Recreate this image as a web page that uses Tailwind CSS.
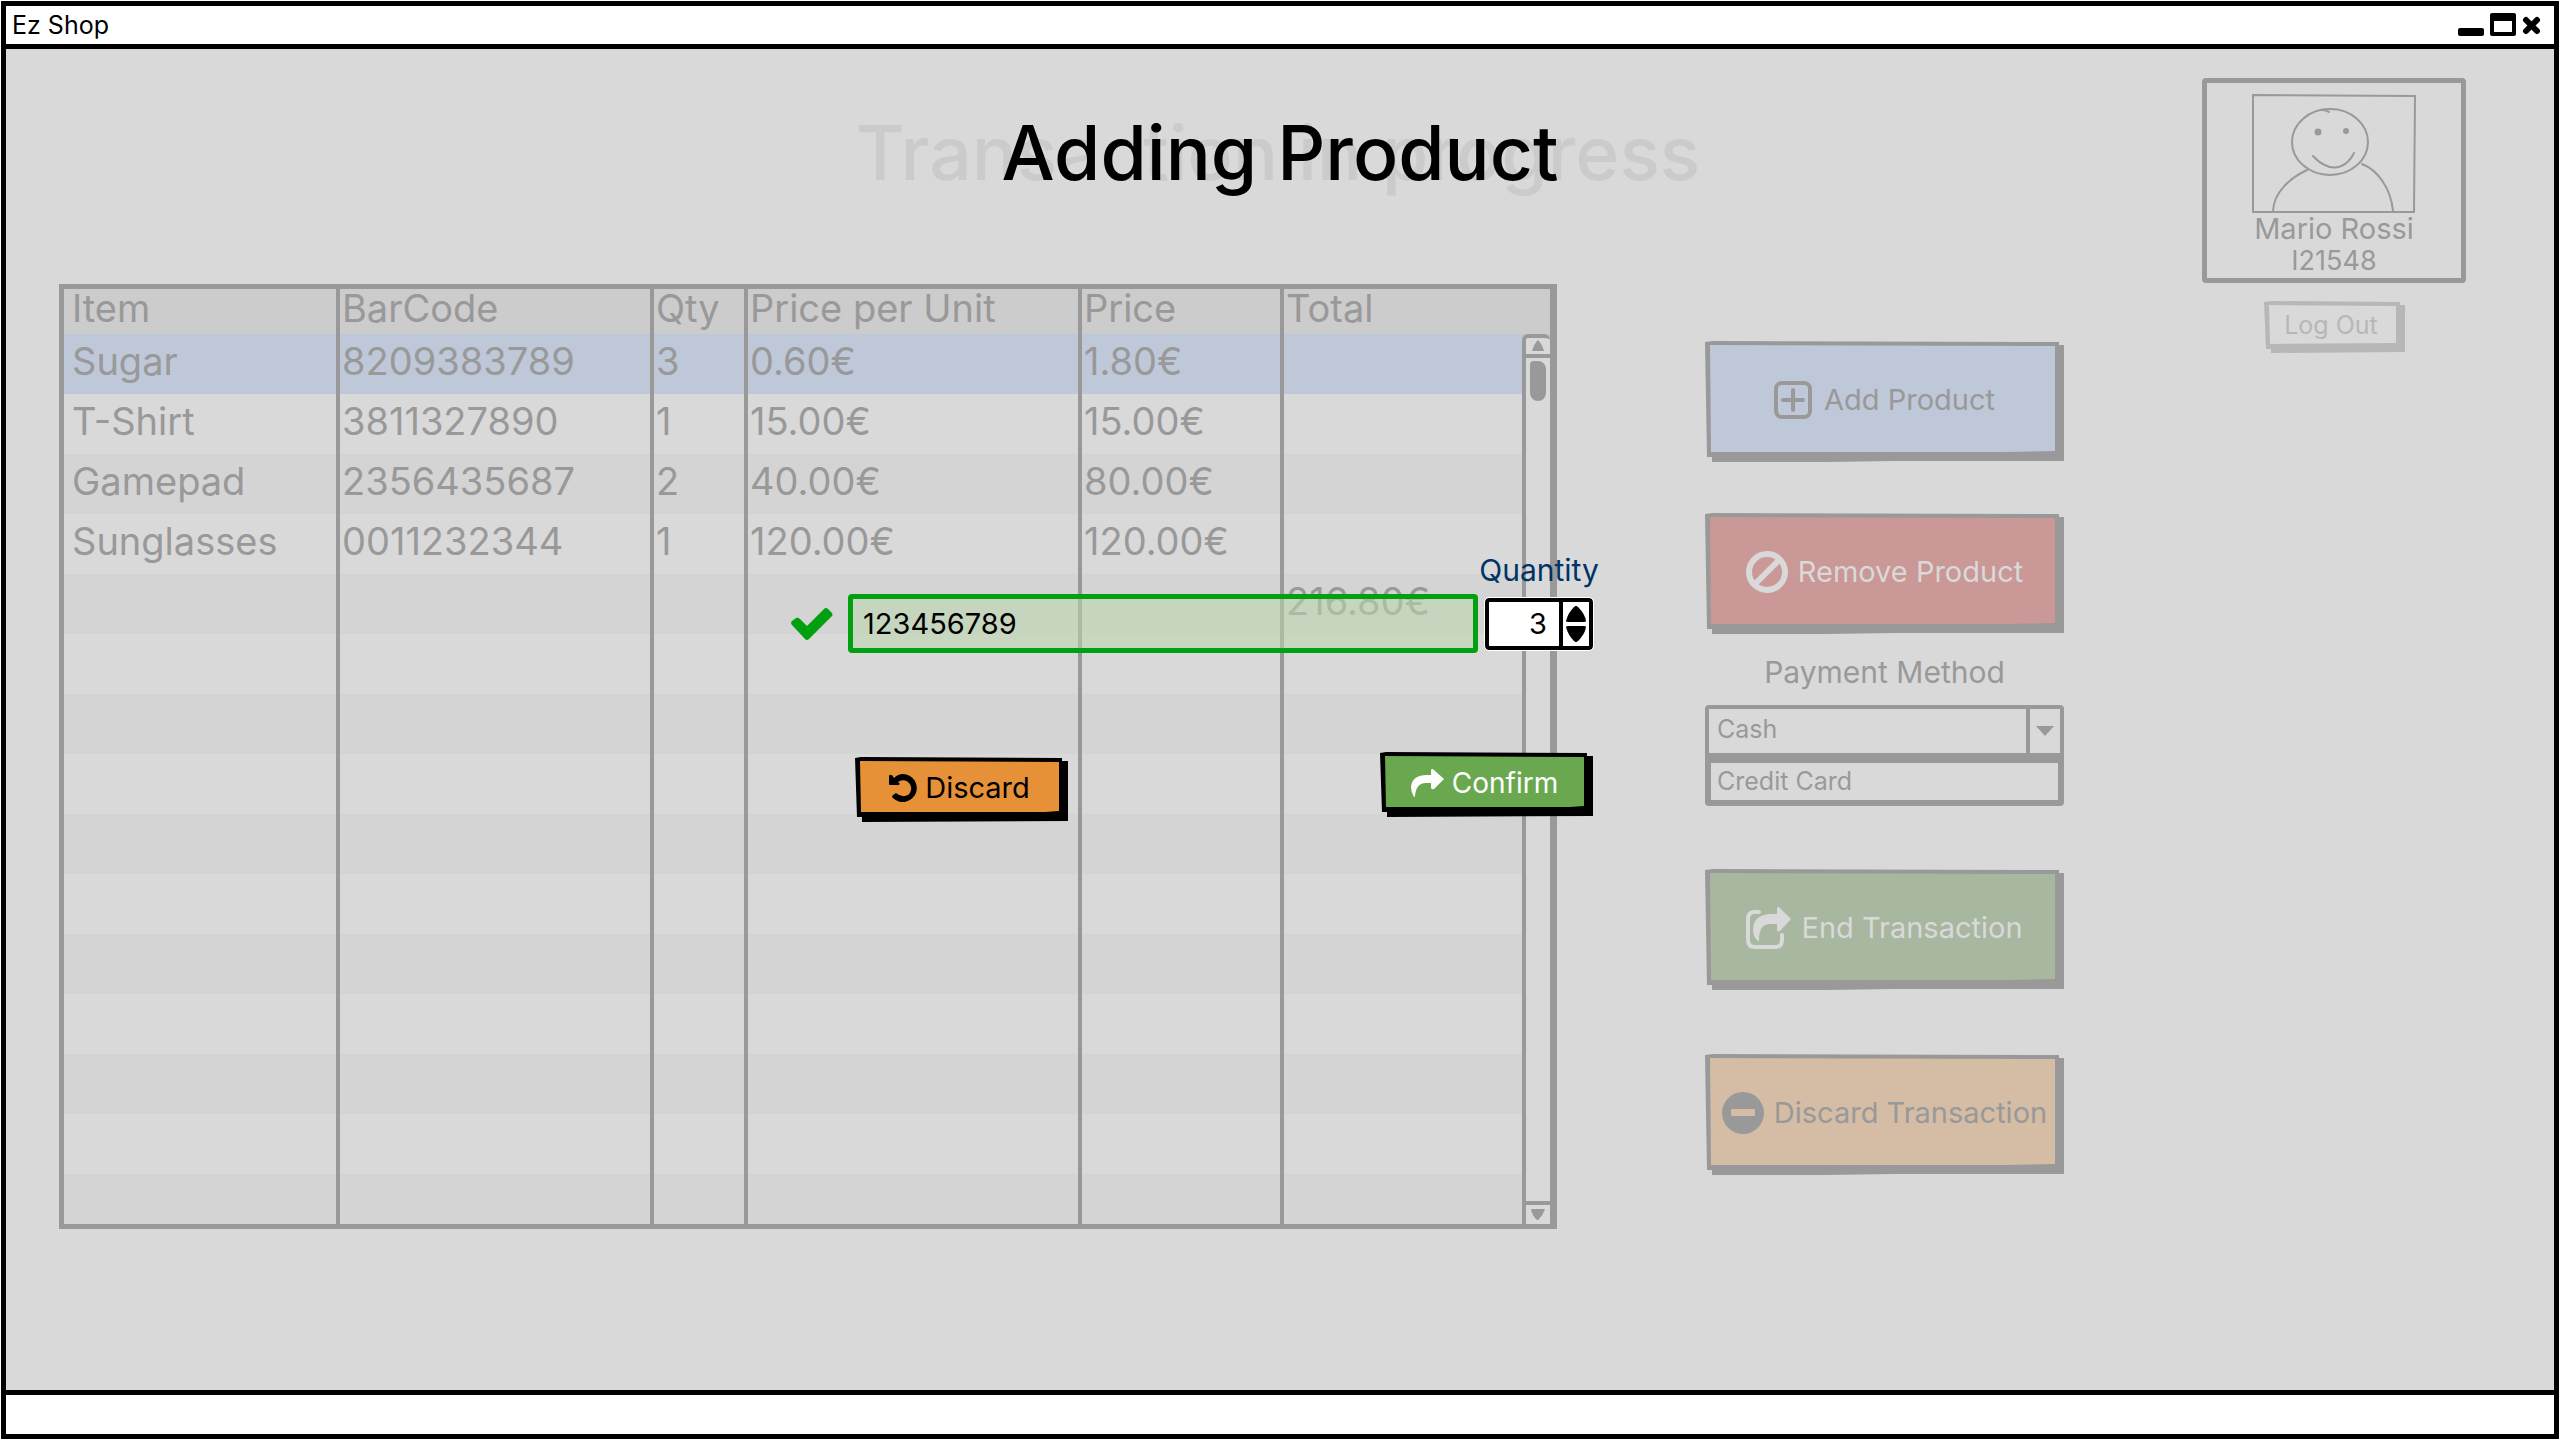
<!DOCTYPE html>
<html lang="en">
<head>
<meta charset="utf-8">
<meta name="viewport" content="width=device-width, initial-scale=1">
<title>Ez Shop</title>
<script src="https://cdn.jsdelivr.net/npm/@tailwindcss/browser@4"></script>
</head>
<body class="bg-white font-['Inter',sans-serif] text-[#999]">

<!-- Sketched frames: dark silhouette in the text colour, face in the fill colour -->
<svg class="hidden" aria-hidden="true">
  <symbol id="frame-lg" viewBox="0 0 359 121" preserveAspectRatio="none">
    <path fill="currentColor" d="M0 1 8 0 354 1V4H359V120H190L120 121H7V116H2Z"/>
    <path d="M5 4 350 5V110L300 111H6Z"/>
  </symbol>
  <symbol id="frame-md" viewBox="0 0 213 65" preserveAspectRatio="none">
    <path fill="currentColor" d="M0 1 6 0 207 1V4H213V64L7 65V60H2Z"/>
    <path d="M5 4 204 5V54L190 55 6 55Z"/>
  </symbol>
  <symbol id="frame-sm" viewBox="0 0 141 52" preserveAspectRatio="none">
    <path fill="currentColor" d="M0 1 8 0 136 1V4H141V51L7 52V48H2Z"/>
    <path d="M5 4 132 5V42L6 43Z"/>
  </symbol>
</svg>

<div class="flex min-h-screen p-px">
<div class="flex flex-1 flex-col border-5 border-black">

  <header class="flex h-[43px] items-center justify-between border-b-5 border-black bg-white pr-[13px] pl-1.5 text-black">
    <span class="text-[25px] leading-8">Ez Shop</span>
    <div class="flex items-center gap-1.5">
      <button type="button" aria-label="Minimize"><svg class="block h-6 w-[26px]" viewBox="0 0 26 24"><rect y="15" width="26" height="8" rx="2"/></svg></button>
      <button type="button" aria-label="Maximize"><svg class="block h-6 w-[26px]" viewBox="0 0 26 24"><path fill-rule="evenodd" d="M2 0H24Q26 0 26 2V21Q26 23 24 23H2Q0 23 0 21V2Q0 0 2 0ZM4 8V19H22V8Z"/></svg></button>
      <button type="button" aria-label="Close"><svg class="block h-6 w-[19px]" viewBox="0 0 19 24"><path d="M4 7 15 18M15 7 4 18" stroke="currentColor" stroke-width="6" stroke-linecap="round"/></svg></button>
    </div>
  </header>

  <main class="grid flex-1 grid-cols-1 grid-rows-1 bg-[#d9d9d9]">

    <!-- Page behind the dialog -->
    <h2 class="mt-[58px] self-start justify-self-center pr-1 text-[75px] leading-[92px] font-medium text-[#cbcbcb] [grid-area:1/1]">Transaction in progress</h2>

    <div class="flex items-start pr-[88px] pl-[53px] [grid-area:1/1]">
      <section class="mt-[235px] grid flex-1 border-5 border-r-7 border-[#999]">
        <table class="w-full table-fixed border-separate border-spacing-0 text-left text-[38px] whitespace-nowrap [grid-area:1/1] [&_td]:h-[60px] [&_td]:border-[#999] [&_td]:px-0.5 [&_td]:py-0 [&_td]:align-top [&_td]:leading-[54px] [&_td:first-child]:pl-2 [&_td:not(:last-child)]:border-r-4 [&_th]:h-[45px] [&_th]:border-[#999] [&_th]:px-0.5 [&_th]:py-0 [&_th]:align-top [&_th]:leading-[38px] [&_th]:font-normal [&_th:first-child]:pl-2 [&_th:not(:last-child)]:border-r-4">
          <colgroup><col class="w-[276px]"><col class="w-[314px]"><col class="w-[94px]"><col class="w-[334px]"><col class="w-[202px]"><col></colgroup>
          <thead class="bg-[#ccc]">
            <tr><th>Item</th><th>BarCode</th><th>Qty</th><th>Price per Unit</th><th>Price</th><th>Total</th></tr>
          </thead>
          <tbody class="[&>tr:first-child]:bg-[#bec8d8] [&>tr:last-child>td]:h-[50px] [&>tr:nth-child(2n+3)]:bg-[#d4d4d4]">
            <tr><td>Sugar</td><td>8209383789</td><td>3</td><td>0.60€</td><td>1.80€</td><td></td></tr>
            <tr><td>T-Shirt</td><td>3811327890</td><td>1</td><td>15.00€</td><td>15.00€</td><td></td></tr>
            <tr><td>Gamepad</td><td>2356435687</td><td>2</td><td>40.00€</td><td>80.00€</td><td></td></tr>
            <tr><td>Sunglasses</td><td>0011232344</td><td>1</td><td>120.00€</td><td>120.00€</td><td></td></tr>
            <tr><td></td><td></td><td></td><td></td><td></td><td>216.80€</td></tr>
            <tr><td></td><td></td><td></td><td></td><td></td><td></td></tr>
            <tr><td></td><td></td><td></td><td></td><td></td><td></td></tr>
            <tr><td></td><td></td><td></td><td></td><td></td><td></td></tr>
            <tr><td></td><td></td><td></td><td></td><td></td><td></td></tr>
            <tr><td></td><td></td><td></td><td></td><td></td><td></td></tr>
            <tr><td></td><td></td><td></td><td></td><td></td><td></td></tr>
            <tr><td></td><td></td><td></td><td></td><td></td><td></td></tr>
            <tr><td></td><td></td><td></td><td></td><td></td><td></td></tr>
            <tr><td></td><td></td><td></td><td></td><td></td><td></td></tr>
            <tr><td></td><td></td><td></td><td></td><td></td><td></td></tr>
          </tbody>
        </table>
        <div class="mt-[45px] flex w-7 flex-col justify-self-end rounded-t-md border-t-4 border-l-4 border-[#999] bg-[#d9d9d9] [grid-area:1/1]">
          <button type="button" aria-label="Scroll up" class="flex h-5 items-center justify-center border-b-4 border-[#999]"><svg class="h-3 w-3.5" viewBox="0 0 14 12"><path fill="currentColor" d="M7 0Q11 4 13 11H1Q3 4 7 0Z"/></svg></button>
          <div class="flex-1 pt-[3px] pl-1"><div class="h-10 w-4 rounded-lg rounded-tl-sm bg-[#999]"></div></div>
          <button type="button" aria-label="Scroll down" class="flex h-[23px] items-center justify-center border-t-4 border-[#999]"><svg class="h-3 w-3.5" viewBox="0 0 14 12"><path fill="currentColor" d="M0 0H14Q12 6 8 10Q7 12 5 10Q1 6 0 0Z"/></svg></button>
        </div>
      </section>

      <section class="mt-[292px] ml-[148px] flex w-[359px] flex-col text-[29px] leading-9">
        <button type="button" class="relative isolate flex h-[121px] items-center justify-center gap-3 pb-[3px]">
          <svg class="absolute inset-0 -z-10 h-full w-full fill-[#bec8d8]"><use href="#frame-lg"/></svg>
          <svg class="h-[38px] w-[38px]" viewBox="0 0 38 38" fill="none" stroke="currentColor" stroke-width="4"><rect x="2" y="2" width="34" height="34" rx="6"/><path stroke-linecap="round" d="M9 19H29M19 9V29"/></svg>
          Add Product
        </button>
        <button type="button" class="relative isolate mt-[51px] flex h-[121px] items-center justify-center gap-2.5 pb-[3px]">
          <svg class="absolute inset-0 -z-10 h-full w-full fill-[#ca9896]"><use href="#frame-lg"/></svg>
          <svg class="h-[42px] w-[42px] text-[#d9d9d9]" viewBox="0 0 42 42" fill="none" stroke="currentColor" stroke-width="6"><circle cx="21" cy="21" r="18"/><path d="M9 33 33 9"/></svg>
          <span class="text-[#d9d9d9]">Remove Product</span>
        </button>

        <label for="payment" class="mt-5 text-center text-[30px]">Payment Method</label>
        <div class="mt-[15px] grid text-[25px]">
          <select id="payment" class="h-[52px] appearance-none rounded-t-sm border-4 border-[#999] bg-transparent pr-10 pb-1 pl-2 leading-10 [grid-area:1/1]">
            <option>Cash</option>
            <option>Credit Card</option>
          </select>
          <span class="pointer-events-none flex w-[38px] items-center justify-center justify-self-end border-l-4 border-[#999] pr-1 [grid-area:1/1]"><svg class="h-2.5 w-[18px]" viewBox="0 0 18 10"><path fill="currentColor" d="M0 0H18L9 10Z"/></svg></span>
        </div>
        <ul class="h-[49px] rounded-b-sm border-6 border-[#999] pl-1.5 text-[25px] leading-9"><li>Credit Card</li></ul>

        <button type="button" class="relative isolate mt-[63px] flex h-[121px] items-center justify-center gap-2.5 pb-[3px]">
          <svg class="absolute inset-0 -z-10 h-full w-full fill-[#a8b7a0]"><use href="#frame-lg"/></svg>
          <svg class="h-[42px] w-[45px] text-[#d9d9d9]" viewBox="0 0 45 42"><path fill="none" stroke="currentColor" stroke-width="4" stroke-linecap="round" d="M13 5H9Q2 5 2 12V33Q2 40 9 40H29Q36 40 36 33V28"/><path fill="currentColor" d="M12 34Q7 30 7 23Q7 8 24 7H31V1Q32-1 34 1L45 12L34 24Q32 25 31 23V17H24Q13 17 13 33Q13 35 12 34Z"/></svg>
          <span class="text-[#d9d9d9]">End Transaction</span>
        </button>
        <button type="button" class="relative isolate mt-16 flex h-[121px] items-center justify-center gap-2.5 pb-[3px]">
          <svg class="absolute inset-0 -z-10 h-full w-full fill-[#d4bca5]"><use href="#frame-lg"/></svg>
          <svg class="h-[42px] w-[42px]" viewBox="0 0 42 42"><circle cx="21" cy="21" r="21" fill="currentColor"/><rect x="9" y="17" width="24" height="7" rx="1" fill="#d4bca5"/></svg>
          Discard Transaction
        </button>
      </section>

      <aside class="mt-[29px] ml-[138px] flex w-[264px] flex-col items-center">
        <div class="flex h-[205px] w-full flex-col items-center rounded-sm border-5 border-[#999] pt-[11px]">
          <svg class="h-[119px] w-[164px]" viewBox="0 0 164 119" fill="none" stroke="currentColor" stroke-width="2" stroke-linecap="round">
            <path d="M1 1 163 2 162 118H1Z"/>
            <ellipse cx="78" cy="48" rx="38" ry="33"/>
            <path d="M70 16Q74 16 77 18M61 62Q71 73 82 73.500Q95 73 102 59M55 76C38 84 22 98 21 117M110 70C126 76 139 95 141 117"/>
            <circle cx="66" cy="38" r="2.500" fill="currentColor"/><circle cx="94" cy="37" r="2" fill="currentColor"/>
          </svg>
          <span class="text-[29px] leading-8">Mario Rossi</span>
          <span class="text-[27px] leading-8">I21548</span>
        </div>
        <button type="button" class="relative isolate mt-[18px] flex h-[52px] w-[141px] items-center justify-center pr-1.5 pb-1 text-[25px] leading-8 text-[#b7b7b8]">
          <svg class="absolute inset-0 -z-10 h-full w-full fill-[#d9d9d9]"><use href="#frame-sm"/></svg>
          Log Out
        </button>
      </aside>
    </div>

    <!-- Add-product dialog -->
    <h1 class="z-10 mt-[58px] self-start justify-self-center text-[75px] leading-[92px] font-medium text-black [grid-area:1/1]">Adding Product</h1>

    <form class="z-10 mt-[503px] mr-44 grid grid-cols-[57px_637px_108px] items-center gap-y-1.5 self-start justify-self-center text-[29px] leading-9 text-black [grid-area:1/1]">
      <label for="qty" class="col-start-3 justify-self-center text-[30px] text-[#036]">Quantity</label>

      <svg class="h-8 w-[42px] text-[#00a010]" viewBox="0 0 42 32"><path fill="currentColor" d="M1 17Q-1 15 1 13L5 10Q7 9 9 11L16 18 33 1Q35-1 37 1L41 5Q42 7 41 8L18 31Q16 33 14 31Z"/></svg>
      <input type="text" aria-label="Barcode" value="123456789" class="h-[59px] w-[630px] rounded-sm border-5 border-[#00a010] bg-[#bad5ac]/55 pr-3 pb-0 pl-2.5 outline-none">
      <div class="flex h-[52px] rounded-sm border-4 border-black bg-white outline outline-white">
        <input id="qty" type="text" inputmode="numeric" value="3" class="w-[70px] pr-3 text-right outline-none">
        <div class="flex flex-1 flex-col items-center justify-center gap-1 border-l-4 border-black">
          <button type="button" aria-label="Increase"><svg class="block h-4 w-5" viewBox="0 0 20 16"><path d="M10 0Q11 0 12 1Q19 8 20 15Q20 16 18 16H2Q0 16 0 15Q2 7 8 1Q9 0 10 0Z"/></svg></button>
          <button type="button" aria-label="Decrease"><svg class="block h-4 w-5" viewBox="0 0 20 16"><path d="M10 16Q11 16 12 15Q19 8 20 1Q20 0 18 0H2Q0 0 0 1Q2 9 8 15Q9 16 10 16Z"/></svg></button>
        </div>
      </div>

      <div class="col-span-3 mt-[93px] ml-16 flex items-start justify-between">
        <button type="button" class="relative isolate mt-[5px] flex h-[65px] w-[213px] items-center justify-center gap-2 pr-1 pb-1">
          <svg class="absolute inset-0 -z-10 h-full w-full fill-[#e69138]"><use href="#frame-md"/></svg>
          <svg class="h-7 w-7" viewBox="0 0 28 28"><path d="M1 1Q3 0 5 4Q9 0 14 0A14 14 0 1 1 4 24Q2 23 4 21L7 19Q13 24 19 21A8 8 0 0 0 9 8L11 10Q10 11 9 11H1Q0 11 0 10V2Q0 1 1 1Z"/></svg>
          Discard
        </button>
        <button type="submit" class="relative isolate flex h-[65px] w-[213px] items-center justify-center gap-2 pr-1 pb-1">
          <svg class="absolute inset-0 -z-10 h-full w-full fill-[#6aa84f]"><use href="#frame-md"/></svg>
          <svg class="h-7 w-[33px]" viewBox="0 0 33 28"><path fill="#fff" d="M3 28Q0 23 0 18Q1 6 16 6H20V1Q21-1 23 1L33 10 23 20Q21 21 20 19V14H15Q5 14 4 27Q4 28 3 28Z"/></svg>
          <span class="text-[28px] text-white">Confirm</span>
        </button>
      </div>
    </form>
  </main>

  <footer class="h-11 border-t-5 border-black bg-white"></footer>
</div>
</div>
</body>
</html>
